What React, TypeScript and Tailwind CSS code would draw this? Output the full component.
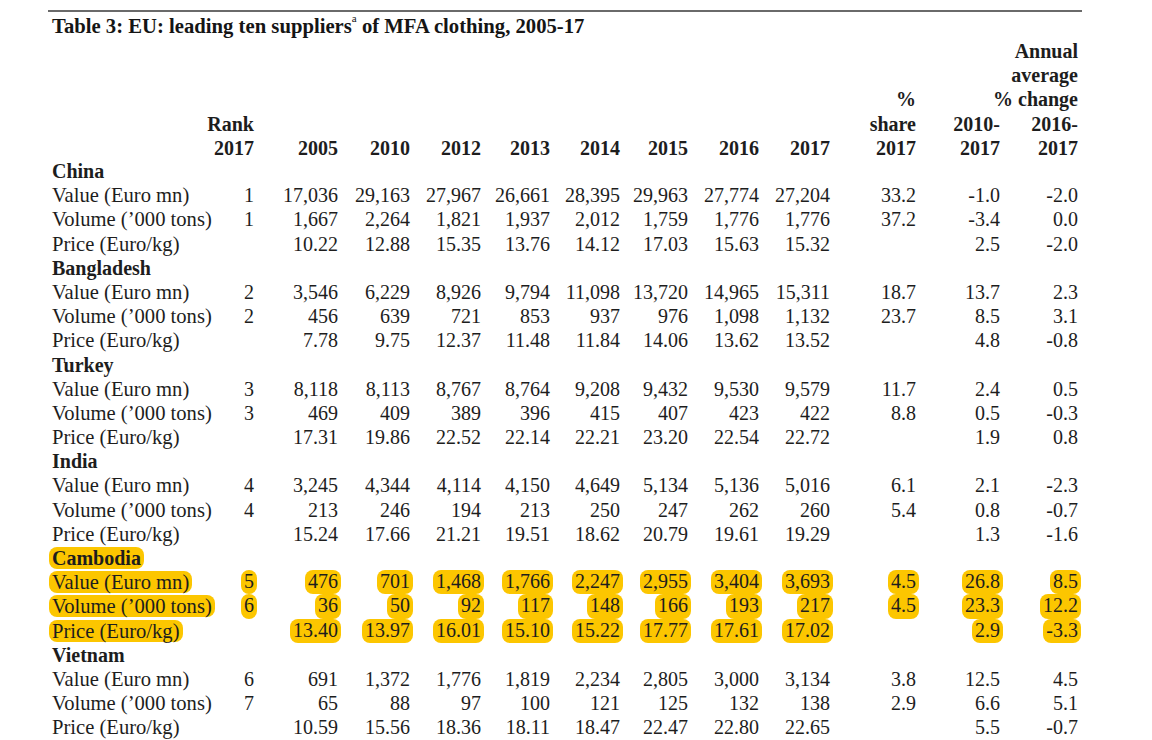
const cols =
  "grid grid-cols-[160px_42px_84px_72px_71px_69px_70px_68px_71px_71px_86px_84px_78px]";

type Row = {
  label: string;
  rank: string;
  values: string[];
  share: string;
  ch1: string;
  ch2: string;
};

type Country = { name: string; marked?: boolean; rows: Row[] };

const data: Country[] = [
  {
    name: "China",
    rows: [
      { label: "Value (Euro mn)", rank: "1", values: ["17,036", "29,163", "27,967", "26,661", "28,395", "29,963", "27,774", "27,204"], share: "33.2", ch1: "-1.0", ch2: "-2.0" },
      { label: "Volume (’000 tons)", rank: "1", values: ["1,667", "2,264", "1,821", "1,937", "2,012", "1,759", "1,776", "1,776"], share: "37.2", ch1: "-3.4", ch2: "0.0" },
      { label: "Price (Euro/kg)", rank: "", values: ["10.22", "12.88", "15.35", "13.76", "14.12", "17.03", "15.63", "15.32"], share: "", ch1: "2.5", ch2: "-2.0" },
    ],
  },
  {
    name: "Bangladesh",
    rows: [
      { label: "Value (Euro mn)", rank: "2", values: ["3,546", "6,229", "8,926", "9,794", "11,098", "13,720", "14,965", "15,311"], share: "18.7", ch1: "13.7", ch2: "2.3" },
      { label: "Volume (’000 tons)", rank: "2", values: ["456", "639", "721", "853", "937", "976", "1,098", "1,132"], share: "23.7", ch1: "8.5", ch2: "3.1" },
      { label: "Price (Euro/kg)", rank: "", values: ["7.78", "9.75", "12.37", "11.48", "11.84", "14.06", "13.62", "13.52"], share: "", ch1: "4.8", ch2: "-0.8" },
    ],
  },
  {
    name: "Turkey",
    rows: [
      { label: "Value (Euro mn)", rank: "3", values: ["8,118", "8,113", "8,767", "8,764", "9,208", "9,432", "9,530", "9,579"], share: "11.7", ch1: "2.4", ch2: "0.5" },
      { label: "Volume (’000 tons)", rank: "3", values: ["469", "409", "389", "396", "415", "407", "423", "422"], share: "8.8", ch1: "0.5", ch2: "-0.3" },
      { label: "Price (Euro/kg)", rank: "", values: ["17.31", "19.86", "22.52", "22.14", "22.21", "23.20", "22.54", "22.72"], share: "", ch1: "1.9", ch2: "0.8" },
    ],
  },
  {
    name: "India",
    rows: [
      { label: "Value (Euro mn)", rank: "4", values: ["3,245", "4,344", "4,114", "4,150", "4,649", "5,134", "5,136", "5,016"], share: "6.1", ch1: "2.1", ch2: "-2.3" },
      { label: "Volume (’000 tons)", rank: "4", values: ["213", "246", "194", "213", "250", "247", "262", "260"], share: "5.4", ch1: "0.8", ch2: "-0.7" },
      { label: "Price (Euro/kg)", rank: "", values: ["15.24", "17.66", "21.21", "19.51", "18.62", "20.79", "19.61", "19.29"], share: "", ch1: "1.3", ch2: "-1.6" },
    ],
  },
  {
    name: "Cambodia",
    marked: true,
    rows: [
      { label: "Value (Euro mn)", rank: "5", values: ["476", "701", "1,468", "1,766", "2,247", "2,955", "3,404", "3,693"], share: "4.5", ch1: "26.8", ch2: "8.5" },
      { label: "Volume (’000 tons)", rank: "6", values: ["36", "50", "92", "117", "148", "166", "193", "217"], share: "4.5", ch1: "23.3", ch2: "12.2" },
      { label: "Price (Euro/kg)", rank: "", values: ["13.40", "13.97", "16.01", "15.10", "15.22", "17.77", "17.61", "17.02"], share: "", ch1: "2.9", ch2: "-3.3" },
    ],
  },
  {
    name: "Vietnam",
    rows: [
      { label: "Value (Euro mn)", rank: "6", values: ["691", "1,372", "1,776", "1,819", "2,234", "2,805", "3,000", "3,134"], share: "3.8", ch1: "12.5", ch2: "4.5" },
      { label: "Volume (’000 tons)", rank: "7", values: ["65", "88", "97", "100", "121", "125", "132", "138"], share: "2.9", ch1: "6.6", ch2: "5.1" },
      { label: "Price (Euro/kg)", rank: "", values: ["10.59", "15.56", "18.36", "18.11", "18.47", "22.47", "22.80", "22.65"], share: "", ch1: "5.5", ch2: "-0.7" },
    ],
  },
];

const Mark = ({ on, children }: { on?: boolean; children: React.ReactNode }) =>
  on && children ? (
    <span className="bg-[#fcc600] rounded-[8px] px-[3px] -mx-[3px] inline-block leading-[22px]">{children}</span>
  ) : (
    <span>{children}</span>
  );

const Num = ({ on, v }: { on?: boolean; v: string }) => (
  <div className="flex justify-end whitespace-nowrap">
    <Mark on={on}>{v}</Mark>
  </div>
);

const Head = ({ lines }: { lines: string[] }) => (
  <div className="flex flex-col items-end justify-end whitespace-nowrap font-bold">
    {lines.map((l, i) => (
      <div key={i} className="flex justify-end">{l}</div>
    ))}
  </div>
);

export default function App() {
  const years = ["2005", "2010", "2012", "2013", "2014", "2015", "2016", "2017"];

  return (
    <div className="w-[1152px] h-[740px] bg-white overflow-hidden pt-[10px] text-[#1d1d1d] font-['Liberation_Serif',serif] text-[20px] leading-[24.18px]">
      <div className="ml-[48px] w-[1034px] h-[2px] bg-[#6a6a6a]" />
      <h1 className="mt-[2px] ml-[52px] font-bold text-[20.7px] leading-[25px] text-[#151515] whitespace-nowrap">
        Table 3: EU: leading ten suppliers<sup className="text-[11px] align-[6px] font-normal">a</sup> of MFA clothing, 2005-17
      </h1>

      <div className="ml-[52px]">
        {/* column headings */}
        <div className={`${cols} h-[120px] items-end`}>
          <div />
          <Head lines={["Rank", "2017"]} />
          {years.map((y) => (
            <Head key={y} lines={[y]} />
          ))}
          <Head lines={["%", "share", "2017"]} />
          <Head lines={["2010-", "2017"]} />
          <Head lines={["Annual", "average", "% change", "2016-", "2017"]} />
        </div>

        {data.map((c) => (
          <div key={c.name}>
            <div className="font-bold whitespace-nowrap">
              <Mark on={c.marked}>{c.name}</Mark>
            </div>
            {c.rows.map((r) => (
              <div key={r.label} className={cols}>
                <div className="whitespace-nowrap text-[20.6px]">
                  <Mark on={c.marked}>{r.label}</Mark>
                </div>
                <Num on={c.marked} v={r.rank} />
                {r.values.map((v, i) => (
                  <Num key={i} on={c.marked} v={v} />
                ))}
                <Num on={c.marked} v={r.share} />
                <Num on={c.marked} v={r.ch1} />
                <Num on={c.marked} v={r.ch2} />
              </div>
            ))}
          </div>
        ))}
      </div>
    </div>
  );
}
